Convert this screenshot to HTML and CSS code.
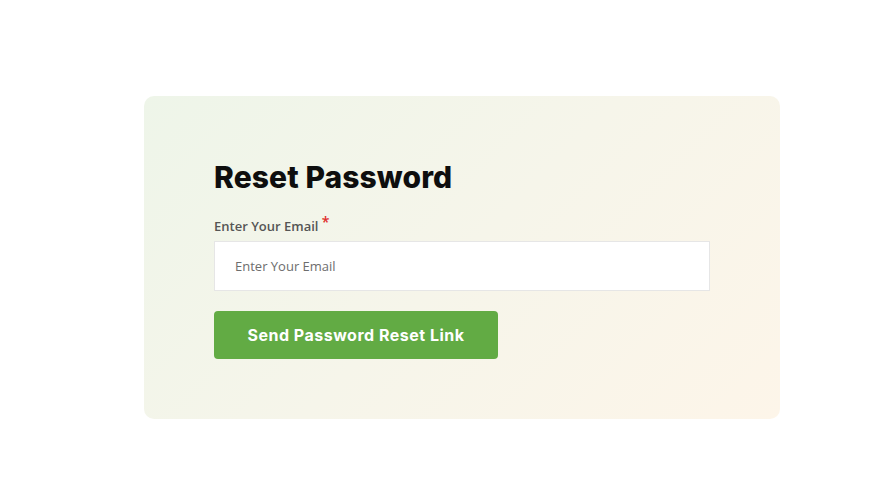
FILE: index.html
```html
<!DOCTYPE html>
<html lang="en">
<head>
    <meta charset="UTF-8">
    <meta name="viewport" content="width=device-width, initial-scale=1.0">
    <title>Reset Password</title>
    <link rel="stylesheet" href="styles.css">
</head>
<body>
    <div class="page">
        <div class="card">
            <h1 class="title">Reset Password</h1>
            <form class="reset-form">
                <label class="label" for="email">Enter Your Email <span class="req">*</span></label>
                <input type="email" id="email" class="field" placeholder="Enter Your Email">
                <button type="button" class="btn">Send Password Reset Link</button>
            </form>
        </div>
    </div>
</body>
</html>
```

FILE: styles.css
```css
* {
    box-sizing: border-box;
}
body {
    margin: 0;
    background: #fff;
    font-family: "Open Sans", "Liberation Sans", sans-serif;
}
.page {
    padding: 96px 0 0 144px;
}
.card {
    width: 636px;
    padding: 61px 70px 60px;
    border-radius: 10px;
    background: linear-gradient(135deg, #eef5e9 0%, #f6f5ea 50%, #fdf5e9 100%);
}
.title {
    margin: 0 0 20px;
    font-family: Inter, "Liberation Sans", sans-serif;
    font-weight: 800;
    font-size: 30px;
    line-height: 40px;
    color: #0e0e0e;
    letter-spacing: 0.1px;
}
.reset-form {
    display: flex;
    flex-direction: column;
    align-items: flex-start;
}
.label {
    font-size: 13px;
    font-weight: 600;
    color: #555;
    line-height: 18px;
    margin-bottom: 6px;
}
.req {
    color: #e02b2b;
    position: relative;
    top: -4px;
    font-size: 14px;
}
.field {
    width: 496px;
    height: 50px;
    border: 1px solid #e6e6e6;
    background: #fff;
    padding: 0 20px;
    font-family: inherit;
    font-size: 13px;
    color: #333;
    outline: none;
    margin-bottom: 20px;
}
.field::placeholder {
    color: #6d6d6d;
}
.btn {
    width: 284px;
    height: 48px;
    border: none;
    border-radius: 4px;
    background: #62ab44;
    color: #fff;
    font-family: Inter, "Liberation Sans", sans-serif;
    font-weight: 700;
    font-size: 16px;
    letter-spacing: 0.5px;
    cursor: pointer;
}
```
